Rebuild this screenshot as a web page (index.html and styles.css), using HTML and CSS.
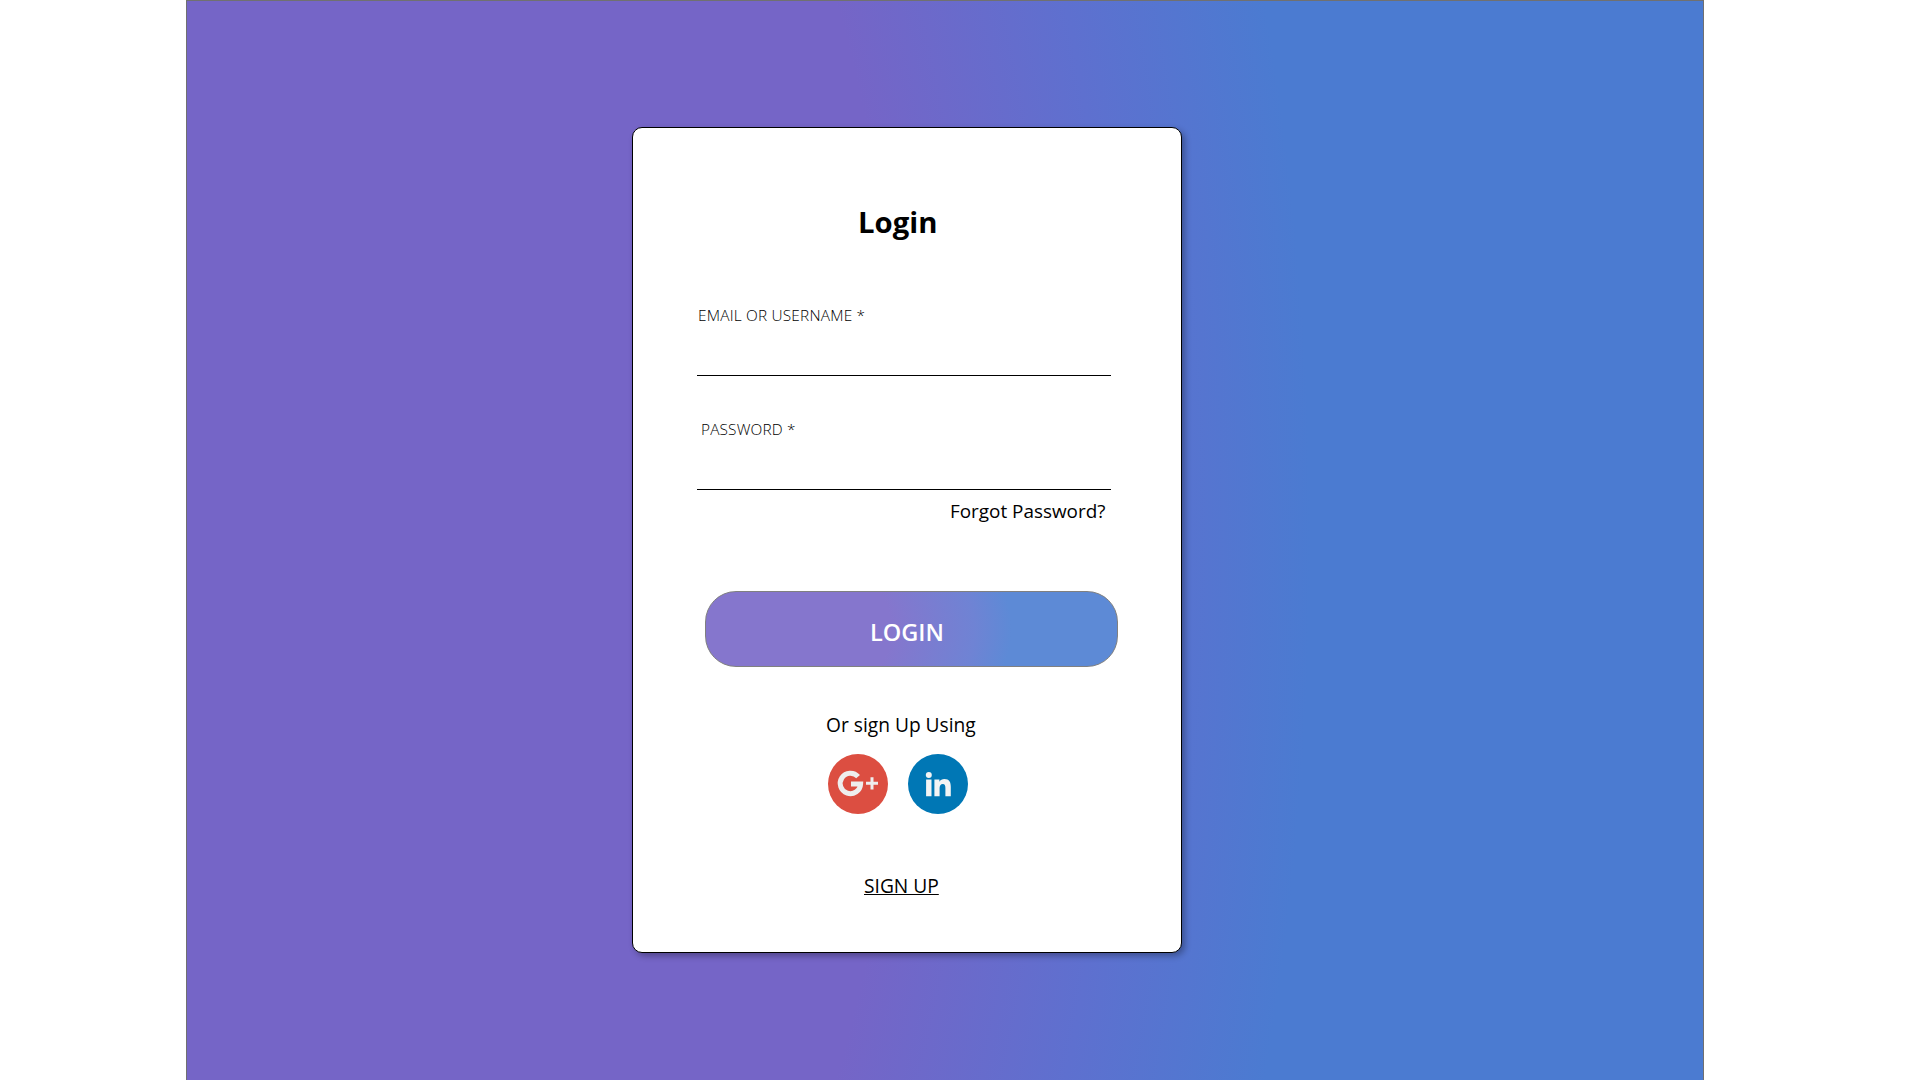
FILE: index.html
```html
<!DOCTYPE html>
<html lang="en">
<head>
<meta charset="utf-8">
<title>Login</title>
<link rel="stylesheet" href="styles.css">
</head>
<body>
<main class="page">
  <form class="card">
    <h1 class="title">Login</h1>
    <div class="field">
      <label class="label" for="user">EMAIL OR USERNAME *</label>
      <input class="input" id="user" type="text">
    </div>
    <div class="field field-password">
      <label class="label" for="pass">PASSWORD *</label>
      <input class="input" id="pass" type="password">
    </div>
    <a class="forgot">Forgot Password?</a>
    <button class="submit" type="button">LOGIN</button>
    <p class="alt">Or sign Up Using</p>
    <div class="social">
      <svg class="icon" viewBox="0 0 60 60" role="img" aria-label="Google Plus">
        <circle cx="30" cy="30" r="30" fill="#dc4e41"/>
        <path d="M30.100 22.700A10.200 10.200 0 1 0 32.600 30H23" fill="none" stroke="#eee" stroke-width="5"/>
        <path d="M44 23.200V35.400M38 29.300H50" fill="none" stroke="#eee" stroke-width="3"/>
      </svg>
      <svg class="icon" viewBox="0 0 60 60" role="img" aria-label="LinkedIn">
        <circle cx="30" cy="30" r="30" fill="#0077b5"/>
        <circle cx="20.800" cy="21" r="3" fill="#f4f4f4"/>
        <path d="M18.100 25.400h5.400V42.200h-5.400zM26.400 25.400h5V27.800c1-1.800 2.800-2.800 5-2.800 5 0 6.400 3.200 6.400 7.800v9.400h-5.400v-8.200c0-2.200-.4-4.100-2.600-4.100s-3.200 1.800-3.200 4.100v8.200h-5.200z" fill="#f4f4f4"/>
      </svg>
    </div>
    <a class="signup">SIGN UP</a>
  </form>
</main>
</body>
</html>
```
FILE: styles.css
```css
* { box-sizing: border-box; }
body {
  margin: 0;
  height: 1080px;
  overflow: hidden;
  background: #fff;
  font-family: "Open Sans", "Noto Sans", sans-serif;
  color: #000;
}
.page {
  width: 1518px;
  height: 1080px;
  margin-left: 186px;
  padding: 126px 0 0 445px;
  border: 1px solid #707070;
  border-bottom: 0;
  background: radial-gradient(1518px 2596px at 0 50%, #7565c7 0%, #7565c7 47.5%, #5e70cf 61.5%, #4b7bd1 74%);
}
.card {
  display: flex;
  flex-direction: column;
  align-items: flex-start;
  width: 550px;
  height: 826px;
  padding: 74px 64px 0;
  background: #fff;
  border: 1px solid #000;
  border-radius: 10px;
  box-shadow: 3px 3px 6px rgba(0, 0, 0, .3);
}
.title {
  margin: 0 0 0 161px;
  font-size: 29.3px;
  font-weight: 700;
  line-height: 40px;
}
.field {
  display: flex;
  flex-direction: column;
  width: 414px;
  height: 73px;
  margin-top: 61px;
}
.field-password { margin-top: 41px; }
.field-password .label {
  padding-left: 4px;
  letter-spacing: .15px;
}
.label {
  padding: 1px 0 0 1px;
  font-size: 15.4px;
  font-weight: 350;
  line-height: 24px;
  letter-spacing: .2px;
}
.input {
  flex: 1;
  width: 100%;
  border: 0;
  border-bottom: 1px solid #000;
  outline: 0;
  background: transparent;
}
.forgot {
  margin: 7px 0 0 253px;
  font-size: 18.9px;
  line-height: 28px;
}
.submit {
  width: 413px;
  height: 76px;
  margin: 66px 0 0 8px;
  padding: 6px 9px 0 0;
  border: 1px solid #808080;
  border-radius: 31px;
  background: radial-gradient(414px 240px at 0 50%, #8576cd 0%, #8576cd 45%, #6f83d4 65%, #5d8ad6 74%) border-box;
  color: #fff;
  font: 600 23.5px/32px "Open Sans", sans-serif;
}
.alt {
  margin: 44px 0 0 129px;
  font-size: 19.2px;
  line-height: 28px;
}
.social {
  display: flex;
  gap: 20px;
  margin: 15px 0 0 131px;
}
.icon { width: 60px; height: 60px; }
.signup {
  margin: 58px 0 0 167px;
  font-size: 19.2px;
  line-height: 28px;
  text-decoration: underline;
}
```
